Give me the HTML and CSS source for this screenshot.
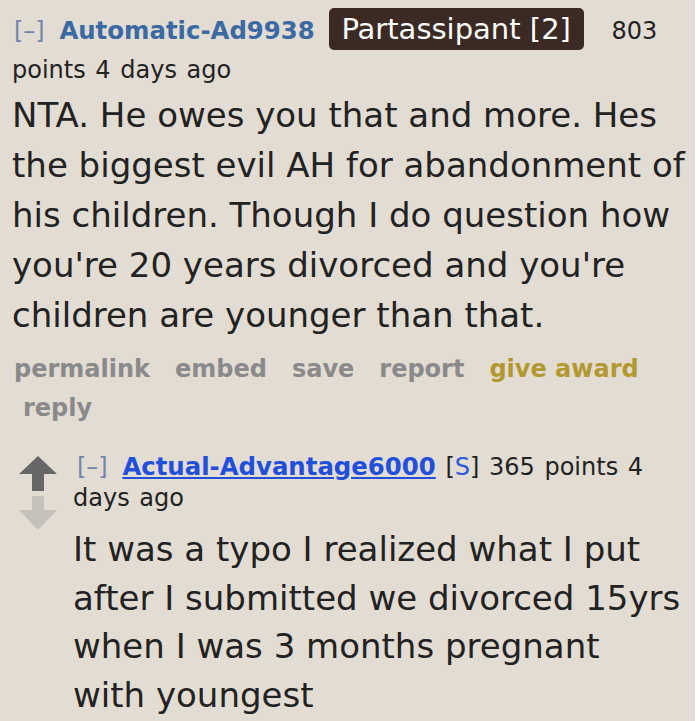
FILE: index.html
```html
<!DOCTYPE html>
<html lang="en">
<head>
    <meta charset="UTF-8">
    <title>Comment</title>
    <link rel="stylesheet" href="styles.css">
</head>
<body>

<div class="page">
    <div class="comment">
        <p class="tagline">
            <a href="#" class="expand">[–]</a>
            <a href="#" class="author">Automatic-Ad9938</a>
            <span class="flair">Partassipant [2]</span>
            <span class="score">803 points</span> <span>4 days ago</span>
        </p>
        <div class="md">
            <p>NTA. He owes you that and more. Hes the biggest evil AH for abandonment of his children. Though I do question how you're 20 years divorced and you're children are younger than that.</p>
        </div>
        <ul class="buttons">
            <li><a href="#">permalink</a></li>
            <li><a href="#">embed</a></li>
            <li><a href="#">save</a></li>
            <li><a href="#">report</a></li>
            <li><a href="#" class="award">give award</a></li>
            <li><a href="#">reply</a></li>
        </ul>

        <div class="child">
            <div class="midcol">
                <svg width="40" height="78" viewBox="0 0 40 78">
                    <polygon points="20,1 39,19 26,19 26,36 14,36 14,19 1,19" fill="#666"/>
                    <polygon points="14,41 26,41 26,55 39,55 20,75 1,55 14,55" fill="#c4c0ba"/>
                </svg>
            </div>
            <div class="entry">
                <p class="tagline small">
                    <a href="#" class="expand">[–]</a>
                    <a href="#" class="author submitter">Actual-Advantage6000</a>
                    <span class="op">[<a href="#">S</a>]</span>
                    <span class="score">365 points</span> <span>4 days ago</span>
                </p>
                <div class="md">
                    <p>It was a typo I realized what I put after I submitted we divorced 15yrs when I was 3 months pregnant with&nbsp;youngest</p>
                </div>
            </div>
        </div>
    </div>
</div>

</body>
</html>
```

FILE: styles.css
```css
body {
    margin: 0;
    padding: 0;
    background-color: #ffffff;
    font-family: "DejaVu Sans", Verdana, sans-serif;
    color: #222;
}
a {
    text-decoration: none;
}
.page {
    width: 695px;
    min-height: 721px;
    background-color: #e2dcd3;
    overflow: hidden;
}
.comment {
    padding: 8px 0 0 12px;
}
.tagline {
    margin: 0;
    font-size: 24px;
    line-height: 39px;
    color: #222;
    word-spacing: 2px;
}
.expand {
    color: #7086ad;
    font-weight: normal;
    margin-left: 2px;
    margin-right: 5px;
}
.author {
    color: #3b6aa3;
    font-weight: bold;
    font-size: 24.4px;
}
.flair {
    display: inline-block;
    background-color: #3b2a23;
    color: #fff;
    font-size: 29px;
    line-height: 42px;
    padding: 0 13px 0 12px;
    margin: 0 18px 0 5px;
    border-radius: 5px;
    word-spacing: 0;
}
.md p {
    margin: 0;
    font-size: 34px;
    line-height: 50px;
    color: #222;
}
.buttons {
    list-style: none;
    margin: 10px 0 0 2px;
    padding: 0;
    display: flex;
    flex-wrap: wrap;
    column-gap: 25px;
    font-size: 24px;
    font-weight: bold;
    line-height: 39px;
}
.buttons li:last-child {
    padding-left: 9px;
}
.buttons a {
    color: #8a8a8a;
}
.buttons a.award {
    color: #b3982f;
}
.child {
    display: flex;
    margin-top: 23px;
}
.midcol {
    flex-shrink: 0;
    width: 61px;
    padding: 4px 0 0 6px;
    box-sizing: border-box;
}
.entry {
    flex: 1;
    min-width: 0;
}
.small {
    line-height: 31px;
}
.small .expand {
    margin-left: 4px;
}
.submitter {
    color: #1f4fdb;
    text-decoration: underline;
}
.op a {
    color: #2d5ad8;
}
.entry .md {
    margin-top: 11px;
}
.entry .md p {
    line-height: 48.5px;
}
```
